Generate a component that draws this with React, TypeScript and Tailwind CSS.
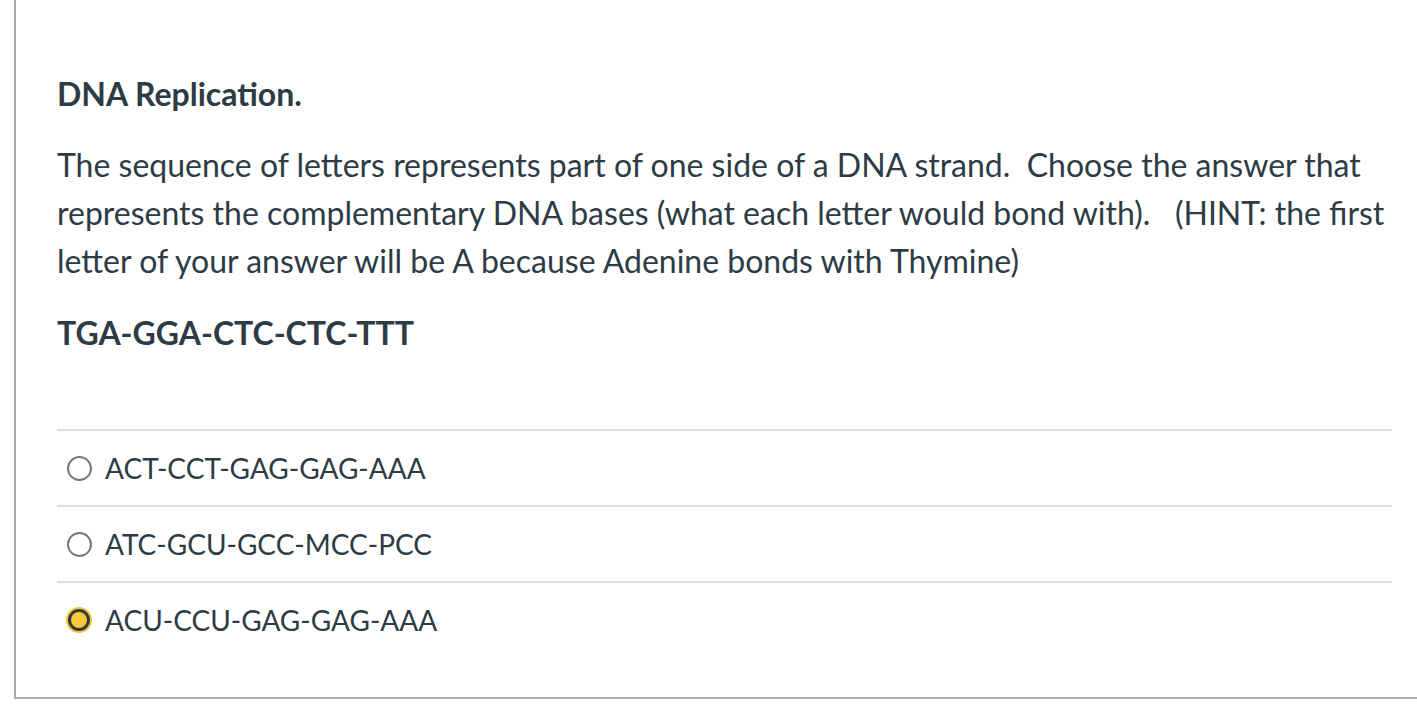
import React from "react";

const answers = [
  { text: "ACT-CCT-GAG-GAG-AAA", selected: false },
  { text: "ATC-GCU-GCC-MCC-PCC", selected: false },
  { text: "ACU-CCU-GAG-GAG-AAA", selected: true },
];

export default function App() {
  return (
    <div
      className="w-[1417px] h-[709px] bg-white text-[#2d3b45] overflow-hidden"
      style={{ fontFamily: "Lato, 'Noto Sans', sans-serif" }}
    >
      <div className="ml-[14px] h-[699px] border-l-2 border-b-2 border-[#aaaaaa] pl-[41px] pr-[25px] pt-[74px]">
        <h2 className="text-[32px] leading-[40px] font-bold">DNA Replication.</h2>
        <div className="mt-[27px] text-[32px] leading-[48px]">
          <p>
            The sequence of letters represents part of one side of a DNA strand.&nbsp; Choose the answer that
            represents the complementary DNA bases (what each letter would bond with).&nbsp;&nbsp; (HINT: the first
            letter of your answer will be A because Adenine bonds with Thymine)
          </p>
          <p className="mt-[24px] font-bold">TGA-GGA-CTC-CTC-TTT</p>
        </div>
        <div className="mt-[72px]">
          {answers.map((a) => (
            <div
              key={a.text}
              className="h-[76px] border-t-2 border-[#dddddd] flex items-center pl-[9px]"
            >
              {a.selected ? (
                <span className="w-[26px] h-[26px] rounded-full bg-[#fbc531] flex items-center justify-center shrink-0">
                  <span className="block w-[22px] h-[22px] rounded-full border-[3px] border-[#2d3b45] bg-[#fcc838]" />
                </span>
              ) : (
                <span className="w-[26px] h-[26px] flex items-center justify-center shrink-0">
                  <span className="block w-[25px] h-[25px] rounded-full border-2 border-[#777777] bg-white" />
                </span>
              )}
              <span className="ml-[13px] text-[28px] leading-[36px]">{a.text}</span>
            </div>
          ))}
        </div>
      </div>
    </div>
  );
}
